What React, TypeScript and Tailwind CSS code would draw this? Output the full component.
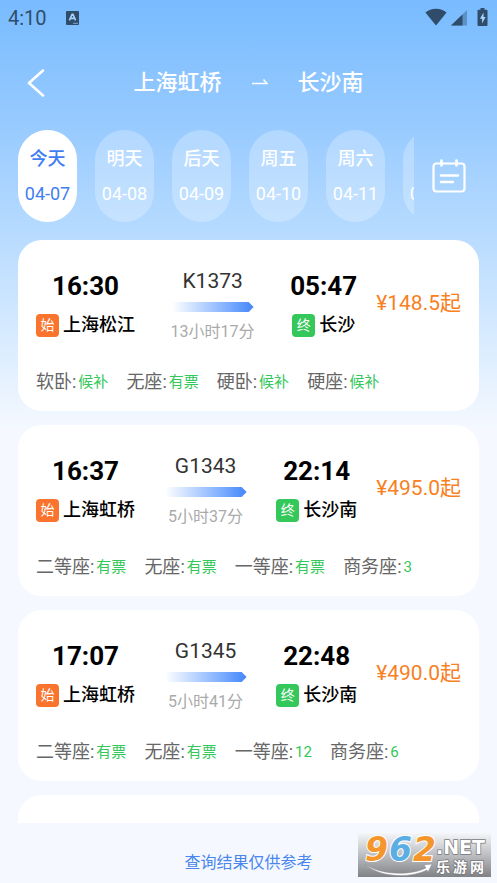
import React, { useState } from 'react';

interface Seat {
  name: string;
  left: string;
}

interface Train {
  no: string;
  depart: string;
  arrive: string;
  from: string;
  to: string;
  duration: string;
  price: string;
  seats: Seat[];
}

const days = [
  { label: '今天', date: '04-07' },
  { label: '明天', date: '04-08' },
  { label: '后天', date: '04-09' },
  { label: '周五', date: '04-10' },
  { label: '周六', date: '04-11' },
  { label: '周日', date: '04-12' },
];

const trains: Train[] = [
  {
    no: 'K1373',
    depart: '16:30',
    arrive: '05:47',
    from: '上海松江',
    to: '长沙',
    duration: '13小时17分',
    price: '148.5',
    seats: [
      { name: '软卧', left: '候补' },
      { name: '无座', left: '有票' },
      { name: '硬卧', left: '候补' },
      { name: '硬座', left: '候补' },
    ],
  },
  {
    no: 'G1343',
    depart: '16:37',
    arrive: '22:14',
    from: '上海虹桥',
    to: '长沙南',
    duration: '5小时37分',
    price: '495.0',
    seats: [
      { name: '二等座', left: '有票' },
      { name: '无座', left: '有票' },
      { name: '一等座', left: '有票' },
      { name: '商务座', left: '3' },
    ],
  },
  {
    no: 'G1345',
    depart: '17:07',
    arrive: '22:48',
    from: '上海虹桥',
    to: '长沙南',
    duration: '5小时41分',
    price: '490.0',
    seats: [
      { name: '二等座', left: '有票' },
      { name: '无座', left: '有票' },
      { name: '一等座', left: '12' },
      { name: '商务座', left: '6' },
    ],
  },
];

function StatusBar() {
  return (
    <div className="flex h-9 items-center justify-between pl-2 pr-[9px] text-[#2f4d6b]">
      <div className="flex items-center gap-[19px]">
        <span className="text-[20px] leading-6">4:10</span>
        <svg width="13" height="14" viewBox="0 0 13 14">
          <rect width="13" height="14" rx="1" fill="currentColor" />
          <path d="M3.4 9.400 6.100 3.200h.8l2.700 6.200M4.600 7.400h3.800" fill="none" stroke="#a9d2fb" strokeWidth="1.600" />
          <path d="M7 12.300h5" stroke="#7da9d4" strokeWidth="1" />
        </svg>
      </div>
      <div className="flex items-center pb-[3px]">
        <svg width="22" height="18" viewBox="0 0 22 18">
          <path d="M11 17.600.4 4.600C3.200 2.200 6.900.8 11 .8s7.800 1.400 10.600 3.800z" fill="currentColor" />
        </svg>
        <svg className="ml-1" width="16" height="18" viewBox="0 0 16 18">
          <path d="M16 2v15.500H0z" fill="currentColor" opacity="0.4" />
          <path d="M11.500 6.400v11.100H0z" fill="currentColor" />
        </svg>
        <svg className="ml-[10px]" width="11" height="18" viewBox="0 0 11 18">
          <path
            d="M3.500 0h4v1.800H9.500a1 1 0 0 1 1 1V17a1 1 0 0 1-1 1h-8a1 1 0 0 1-1-1V2.800a1 1 0 0 1 1-1h2z"
            fill="currentColor"
          />
          <path d="M6.500 4.500 2.900 10.800h2.200v4.700l3.500-6.600H6.500z" fill="#a9d2fb" />
        </svg>
      </div>
    </div>
  );
}

function Header() {
  return (
    <header className="grid h-[94px] grid-cols-[1fr_auto_1fr] items-center px-[18px] text-white">
      <button type="button" aria-label="返回" className="flex h-11 w-9 items-center justify-center">
        <svg width="18" height="28" viewBox="0 0 18 28" fill="none">
          <path
            d="M16 1.500 2 14l14 12.500"
            stroke="currentColor"
            strokeWidth="2.600"
            strokeLinecap="round"
            strokeLinejoin="round"
          />
        </svg>
      </button>
      <h1 className="flex items-center gap-[30px] text-[22px] font-medium leading-8">
        <span>上海虹桥</span>
        <svg width="16" height="8" viewBox="0 0 16 8" fill="none">
          <path d="M0 4.500h15L11.500.5" stroke="currentColor" strokeWidth="1.500" />
        </svg>
        <span>长沙南</span>
      </h1>
    </header>
  );
}

function DayTabs() {
  const [active, setActive] = useState(0);

  return (
    <div className="flex items-center pl-[18px]">
      <div className="flex min-w-0 flex-1 gap-[18px] overflow-x-auto [scrollbar-width:none]">
        {days.map((day, i) => (
          <button
            key={day.date}
            type="button"
            onClick={() => setActive(i)}
            className={`flex h-[92px] w-[59px] shrink-0 flex-col items-center justify-center gap-[11px] rounded-full text-[18px] leading-6 ${
              i === active ? 'bg-white text-[#3f7ef0]' : 'bg-white/25 text-white'
            }`}
          >
            <span className="font-medium">{day.label}</span>
            <span>{day.date}</span>
          </button>
        ))}
      </div>
      <button type="button" aria-label="选择日期" className="flex w-[83px] shrink-0 justify-center pr-[14px] text-white">
        <svg width="34" height="34" viewBox="0 0 34 34" fill="none" stroke="currentColor" strokeLinecap="round">
          <rect x="1.500" y="4.500" width="31" height="28" rx="3" strokeWidth="2.200" />
          <path d="M9.500 1.500v5M24.500 1.500v5" strokeWidth="2.600" />
          <path d="M9 16.500h17M9 23h12" strokeWidth="2.400" />
        </svg>
      </button>
    </div>
  );
}

function Station({ time, name, tag, tagClass }: { time: string; name: string; tag: string; tagClass: string }) {
  return (
    <div className="flex flex-col items-center">
      <span className="text-[26px] font-bold leading-[34px]">{time}</span>
      <div className="mt-[10px] flex h-6 items-center gap-1">
        <span className={`flex h-[23px] w-[23px] items-center justify-center rounded text-[14px] text-white ${tagClass}`}>
          {tag}
        </span>
        <span className="text-[18px] font-medium leading-6">{name}</span>
      </div>
    </div>
  );
}

function TrainCard({ train }: { train: Train }) {
  return (
    <article className="shrink-0 rounded-3xl bg-white px-[18px] pb-[17px] pt-[29px] text-black">
      <div className="flex items-start gap-[19px]">
        <div className="flex flex-1 items-start justify-between">
          <Station time={train.depart} name={train.from} tag="始" tagClass="bg-[#fa742d]" />
          <div className="flex flex-col items-center">
            <span className="text-[21px] leading-6 text-[#333333]">{train.no}</span>
            {/* direction bar, fades in and ends in a blunt tip */}
            <div className="mt-[9px] h-[10px] w-[82px] bg-linear-to-r from-white to-[#4285f9] [clip-path:polygon(0_0,94%_0,100%_50%,94%_100%,0_100%)]"></div>
            <span className="mt-[10px] text-[16px] leading-5 text-[#aaaaaa]">{train.duration}</span>
          </div>
          <Station time={train.arrive} name={train.to} tag="终" tagClass="bg-[#34c759]" />
        </div>
        <span className="pt-4 text-[21px] leading-9 text-[#f8801e]">¥{train.price}起</span>
      </div>
      <ul className="mt-7 flex gap-[18px] leading-6">
        {train.seats.map((seat) => (
          <li key={seat.name} className="flex items-center gap-[2px]">
            <span className="text-[18px] text-[#666666]">{seat.name}:</span>
            <span className="text-[15px] text-[#34c759]">{seat.left}</span>
          </li>
        ))}
      </ul>
    </article>
  );
}

function Watermark() {
  return (
    <svg className="absolute bottom-[6px] right-[6px]" width="133" height="44" viewBox="0 0 133 44">
      <defs>
        <linearGradient id="wm-bg" x1="0" y1="0" x2="0" y2="1">
          <stop offset="0" stopColor="#f4f6fa" />
          <stop offset="0.500" stopColor="#bdbec1" />
          <stop offset="1" stopColor="#818285" />
        </linearGradient>
      </defs>
      <rect width="133" height="44" fill="url(#wm-bg)" />
      <path
        d="M7 31c15 11 45 12 61 4l-2-3 8-1-4 8-1-2C51 46 20 44 7 31z"
        fill="#ffffff"
        stroke="#8b8c90"
        strokeWidth="0.500"
      />
      <g
        fontFamily="'DejaVu Sans', sans-serif"
        fontWeight="bold"
        fontStyle="oblique"
        fontSize="33"
        stroke="#ffffff"
        strokeWidth="2"
        paintOrder="stroke"
      >
        <text x="7" y="28" fill="#f5962c">9</text>
        <text x="31" y="28" fill="#5aaee3">6</text>
        <text x="55" y="28" fill="#f5962c">2</text>
      </g>
      <g fill="#ffffff" stroke="#77787c" strokeWidth="1.500" paintOrder="stroke" fontWeight="bold">
        <text x="78" y="21" fontFamily="'DejaVu Sans', sans-serif" fontSize="19">.NET</text>
        <g fontFamily="'Noto Sans CJK SC', sans-serif" fontSize="14">
          <text x="78" y="39">乐</text>
          <text x="95" y="39">游</text>
          <text x="112" y="39">网</text>
        </g>
      </g>
    </svg>
  );
}

export default function App() {
  return (
    <div className="relative flex h-screen flex-col bg-[#f5f9ff] bg-[linear-gradient(to_bottom,#78bbff_0px,#99cbff_130px,#b9dcff_240px,#f5f9ff_430px)] font-['Roboto','Noto_Sans_CJK_SC',sans-serif]">
      <StatusBar />
      <Header />
      <DayTabs />
      <main className="mx-[18px] mt-[18px] flex min-h-0 flex-1 flex-col gap-[14px] overflow-y-auto [scrollbar-width:none]">
        {trains.map((train) => (
          <TrainCard key={train.no} train={train} />
        ))}
        <div className="h-[171px] shrink-0 rounded-3xl bg-white"></div>
      </main>
      <footer className="pb-[10px] pt-[30px] text-center text-[16px] leading-5 text-[#4a86ee]">查询结果仅供参考</footer>
      <Watermark />
    </div>
  );
}
